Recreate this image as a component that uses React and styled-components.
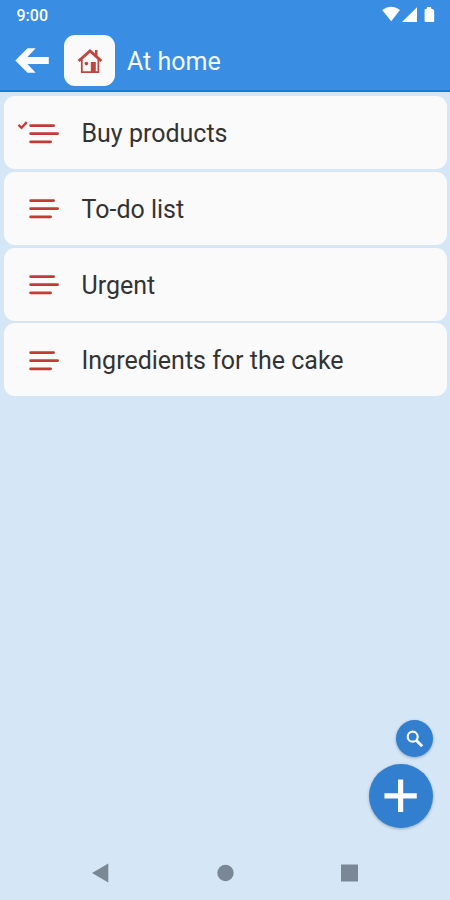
import React from 'react';
import styled, { createGlobalStyle } from 'styled-components';

const GlobalStyle = createGlobalStyle`
  * {
    box-sizing: border-box;
  }

  body {
    margin: 0;
    font-family: Roboto, 'Liberation Sans', sans-serif;
  }

  button {
    border: none;
    padding: 0;
    font: inherit;
    cursor: pointer;
  }
`;

const Screen = styled.div`
  display: flex;
  flex-direction: column;
  height: 900px;
  width: 450px;
  overflow: hidden;
  background: #d5e6f6;
`;

const Header = styled.header`
  height: 92px;
  flex: none;
  background: #398de3;
  border-bottom: 2px solid #0f80dc;
`;

const StatusBar = styled.div`
  display: flex;
  align-items: center;
  justify-content: space-between;
  height: 30px;
  padding: 0 14px 0 16.5px;
  color: #fff;
  font-size: 16px;
  font-weight: 500;
`;

const StatusIcons = styled.svg`
  display: block;
  width: 54px;
  height: 18px;
  margin-top: -2px;
`;

const Toolbar = styled.div`
  display: flex;
  align-items: center;
  height: 61px;
  padding-left: 15px;
`;

const BackButton = styled.button`
  display: flex;
  width: 34px;
  height: 26px;
  background: none;
`;

const HomeBadge = styled.div`
  display: flex;
  align-items: center;
  justify-content: center;
  width: 51px;
  height: 51px;
  margin-left: 15px;
  border-radius: 11px;
  background: #fafafa;
`;

const Title = styled.h1`
  margin: 1px 0 0 12px;
  color: #f4f9ff;
  font-size: 25px;
  font-weight: 400;
`;

const Lists = styled.main`
  display: flex;
  flex-direction: column;
  flex: 1;
  gap: 2.8px;
  padding: 4px 3px 0 4px;
`;

const ListCard = styled.div`
  display: flex;
  align-items: center;
  height: 73px;
  padding-left: 13px;
  border-radius: 11px;
  background: #fafafa;
`;

const ListIcon = styled.svg`
  display: block;
  width: 44px;
  height: 30px;
`;

const ListName = styled.span`
  margin: 2px 0 0 20.5px;
  color: #333;
  font-size: 25px;
  font-weight: 400;
  white-space: nowrap;
`;

const Actions = styled.div`
  display: flex;
  flex-direction: column;
  align-items: flex-end;
  gap: 7px;
  padding: 0 17px 18px 0;
`;

const RoundButton = styled.button`
  display: flex;
  align-items: center;
  justify-content: center;
  width: ${(props) => props.$size}px;
  height: ${(props) => props.$size}px;
  border-radius: 50%;
  background: #317fce;
  box-shadow: 0 1px 3px rgba(40, 70, 110, 0.4);
`;

const NavBar = styled.nav`
  display: flex;
  align-items: center;
  justify-content: space-between;
  height: 54px;
  padding: 0 92px;
`;

const NavIcon = styled.svg`
  display: block;
  width: 17px;
  height: 20px;
  fill: #7a8896;
`;

const lists = [
  { name: 'Buy products', checked: true },
  { name: 'To-do list' },
  { name: 'Urgent' },
  { name: 'Ingredients for the cake' },
];

const LinesIcon = ({ checked }) => (
  <ListIcon viewBox="0 0 44 30" fill="none" stroke="#c23b35" strokeLinecap="round">
    {checked && <path d="M1.5 6.9 4.5 9.9 9.8 4.1" strokeWidth="2.3" strokeLinecap="butt" />}
    <path d="M13.6 7.6H36.6M13.6 15.6H40.6M13.6 23.8H33.6" strokeWidth="2.8" />
  </ListIcon>
);

const HouseIcon = () => (
  <svg width="26" height="26" viewBox="0 0 26 26" fill="none" stroke="#c0443f">
    <path d="M1.7 13 13 2.9 24.3 13" strokeWidth="3" />
    <path d="M19.2 8.5V2" strokeWidth="2.6" />
    <path d="M4.8 11.5V24.2H21.4V11.5" strokeWidth="1.8" />
    <path d="M13.8 14h5v10h-5z" fill="#c0443f" stroke="none" />
    <circle cx="9.4" cy="15.6" r="1.8" fill="#c0443f" stroke="none" />
  </svg>
);

const App = () => {
  return (
    <>
      <GlobalStyle />
      <Screen>
        <Header>
          <StatusBar>
            <span>9:00</span>
            <StatusIcons viewBox="0 0 54 18" fill="#fff">
              <path d="M0.2 5Q9 -1.6 18 5L9.2 16.2z" />
              <path d="M35 2.2V17H20z" />
              <path d="M42.6 4.5 45 3.6V2h4v1.6l2.4.9q.8 1 .8 2v9.5q0 1-1 1H43.6q-1 0-1-1z" />
            </StatusIcons>
          </StatusBar>
          <Toolbar>
            <BackButton aria-label="Back">
              <svg width="34" height="26" viewBox="0 0 34 26" fill="#fafafa">
                <path d="M0.3 12.5 12.5 0.3H20.7L12.4 9.1H33.8V15.9H12.4L20.7 24.7H12.5z" />
              </svg>
            </BackButton>
            <HomeBadge>
              <HouseIcon />
            </HomeBadge>
            <Title>At home</Title>
          </Toolbar>
        </Header>
        <Lists>
          {lists.map((list) => (
            <ListCard key={list.name}>
              <LinesIcon checked={list.checked} />
              <ListName>{list.name}</ListName>
            </ListCard>
          ))}
        </Lists>
        <Actions>
          <RoundButton $size={37} aria-label="Search">
            <svg width="18" height="18" viewBox="0 0 18 18" fill="none" stroke="#fafafa">
              <circle cx="6.7" cy="6.7" r="5" strokeWidth="2.2" />
              <path d="M10.2 10.2 16.2 16.2" strokeWidth="3" />
            </svg>
          </RoundButton>
          <RoundButton $size={64} aria-label="Add list">
            <svg width="34" height="34" viewBox="0 0 34 34" stroke="#fafafa" strokeWidth="5.2">
              <path d="M16.6 0.6V33M0.4 16.8H32.8" />
            </svg>
          </RoundButton>
        </Actions>
        <NavBar>
          <NavIcon viewBox="0 0 17 20">
            <path d="M0 10 16.3 0.6V19.4z" />
          </NavIcon>
          <NavIcon viewBox="0 0 17 20">
            <circle cx="8.5" cy="10" r="8.2" />
          </NavIcon>
          <NavIcon viewBox="0 0 17 20">
            <path d="M0 1.5h17v17H0z" />
          </NavIcon>
        </NavBar>
      </Screen>
    </>
  );
};

export default App;
